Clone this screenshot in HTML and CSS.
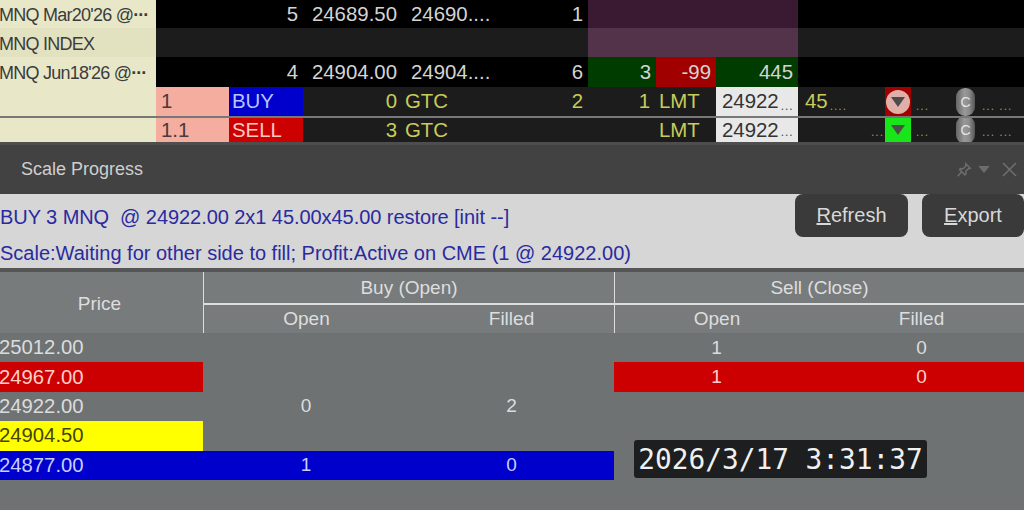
FILE: index.html
```html
<!DOCTYPE html>
<html lang="en">
<head>
<meta charset="utf-8">
<title>Scale Progress</title>
<link rel="stylesheet" href="styles.css">
</head>
<body>
<div class="page">
  <section class="blotter">
    <div class="row r1 black">
      <div class="cell name">MNQ Mar20'26 @<span class="dots">···</span></div><div></div>
      <div class="cell right c-pad">5</div><div class="cell right">24689.50</div><div class="cell trunc">24690....</div><div class="cell right c-pad2">1</div>
      <div class="purple span3"></div><div></div><div></div><div></div><div></div>
    </div>
    <div class="row r2 gray">
      <div class="cell name alt">MNQ INDEX</div><div></div><div></div><div></div><div></div><div></div>
      <div class="purple2 span3"></div><div></div><div></div><div></div><div></div>
    </div>
    <div class="row r3 black">
      <div class="cell name">MNQ Jun18'26 @<span class="dots">···</span></div><div></div>
      <div class="cell right c-pad">4</div><div class="cell right">24904.00</div><div class="cell trunc">24904....</div><div class="cell right c-pad2">6</div>
      <div class="cell right green">3</div><div class="cell right darkred">-99</div><div class="cell right green">445</div><div></div><div></div><div></div><div></div>
    </div>
    <div class="row r4 gray line">
      <div class="cell name"></div><div class="cell pink">1</div><div class="cell blue">BUY</div>
      <div class="cell right yel">0</div><div class="cell yel gtc">GTC</div><div class="cell right yel c-pad2">2</div>
      <div class="cell right yel c-pad6">1</div><div class="cell yel lmt">LMT</div><div class="cell white">24922<span class="tiny">...</span></div>
      <div class="cell yel pad45">45<span class="tiny">....</span></div>
      <div class="flag red-flag"><span class="circle"><span class="tri"></span></span></div>
      <div class="cell yel tinycell"><span class="tiny">...</span></div>
      <div class="cell cwrap"><span class="cbtn">C</span><span class="tiny">... ...</span></div>
    </div>
    <div class="row r5 gray">
      <div class="cell name"></div><div class="cell pink">1.1</div><div class="cell redbg">SELL</div>
      <div class="cell right yel">3</div><div class="cell yel gtc">GTC</div><div></div>
      <div></div><div class="cell yel lmt">LMT</div><div class="cell white">24922<span class="tiny">...</span></div>
      <div class="cell right yel tinyend"><span class="tiny">...</span></div>
      <div class="flag green-flag"><span class="tri"></span></div>
      <div class="cell yel tinycell"><span class="tiny">...</span></div>
      <div class="cell cwrap"><span class="cbtn">C</span><span class="tiny">... ...</span></div>
    </div>
  </section>

  <header class="titlebar">
    <span class="title">Scale Progress</span>
    <div class="win-icons">
      <svg class="ico-pin" width="16" height="16" viewBox="0 0 18 18"><path d="M11 2l5 5-2 .5-3 3 .2 3-1.2 1L4 8.500l1-1.200 3 .2 3-3z M6 11.500L2 16" fill="none" stroke="#6d6d6d" stroke-width="1.700"/></svg>
      <svg class="ico-down" width="12" height="7" viewBox="0 0 13 8"><path d="M0 0h13L6.500 8z" fill="#6d6d6d"/></svg>
      <svg class="ico-x" width="15" height="15" viewBox="0 0 15 15"><path d="M1 1l13 13M14 1L1 14" stroke="#6d6d6d" stroke-width="1.700"/></svg>
    </div>
  </header>

  <section class="info">
    <div class="info-text">
      <div class="info-line first">BUY 3 MNQ &nbsp;@ 24922.00 2x1 45.00x45.00 restore [init --]</div>
      <div class="info-line second">Scale:Waiting for other side to fill; Profit:Active on CME (1 @ 24922.00)</div>
    </div>
    <div class="buttons">
      <button class="btn btn-refresh"><u>R</u>efresh</button>
      <button class="btn btn-export"><u>E</u>xport</button>
    </div>
  </section>

  <section class="table">
    <div class="thead">
      <div class="th price-h">Price</div>
      <div class="th group g-buy">Buy (Open)</div>
      <div class="th group g-sell">Sell (Close)</div>
      <div class="th sub s1">Open</div>
      <div class="th sub s2">Filled</div>
      <div class="th sub s3">Open</div>
      <div class="th sub s4">Filled</div>
    </div>
    <div class="trow"><div class="p">25012.00</div><div></div><div></div><div>1</div><div>0</div></div>
    <div class="trow"><div class="p bg-red">24967.00</div><div></div><div></div><div class="bg-red">1</div><div class="bg-red">0</div></div>
    <div class="trow"><div class="p">24922.00</div><div>0</div><div>2</div><div></div><div></div></div>
    <div class="trow"><div class="p bg-yellow">24904.50</div><div></div><div></div><div></div><div></div></div>
    <div class="trow"><div class="p bg-blue">24877.00</div><div class="bg-blue">1</div><div class="bg-blue">0</div><div></div><div></div></div>
  </section>
  <div class="stamp">2026/3/17 3:31:37</div>
</div>
</body>
</html>
```
FILE: styles.css
```css
* { box-sizing: border-box; }
html, body { margin: 0; padding: 0; }
body { width: 1024px; height: 510px; overflow: hidden; background: #6e7273; font-family: "Liberation Sans", Arial, sans-serif; }
.page { position: relative; width: 1024px; height: 510px; display: flex; flex-direction: column; }

.blotter { display: flex; flex-direction: column; font-size: 20.400px; color: #d4d4d4; }
.row { display: grid; grid-template-columns: 156px 73px 74px 97px 91px 97px 68px 60px 82px 87px 26px 44px 69px; }
.r1 { height: 28px; } .r2 { height: 29px; } .r3 { height: 30px; } .r4 { height: 31px; } .r5 { height: 24px; }
.black { background: #000; }
.gray { background: #1c1c1c; }
.line { border-bottom: 2px solid #777; }
.cell { display: flex; align-items: center; white-space: nowrap; overflow: hidden; min-width: 0; }
.right { justify-content: flex-end; padding-right: 3px; }
.c-pad { padding-right: 5px; }
.c-pad2 { padding-right: 5px; }
.c-pad6 { padding-right: 6px; }
.trunc { padding-left: 11px; }
.name { background: #e8e8c8; color: #3c3c3c; font-size: 18px; letter-spacing: -0.750px; text-indent: -1px; padding-top: 3px; }
.name.alt { background: #e2e2c0; }
.dots { font-weight: bold; letter-spacing: -1px; margin-left: 1px; }
.span3 { grid-column: span 3; }
.purple { background: #3a1a33; }
.purple2 { background: #523349; }
.green { background: #003c00; padding-right: 5px; }
.darkred { background: #a00000; padding-right: 5px; }
.pink { background: #f4ad9f; color: #4a3a38; padding-left: 5px; }
.blue { background: #0000cc; color: #b9c6ff; padding-left: 3px; }
.redbg { background: #cc0000; color: #ffc9c0; padding-left: 3px; }
.yel { color: #c8cc58; }
.gtc { padding-left: 5px; }
.lmt { padding-left: 3px; }
.white { background: #e8e8e8; color: #333; padding-left: 6px; }
.tiny { font-size: 12px; letter-spacing: 1px; align-self: flex-end; padding-bottom: 3px; margin-left: 2px; color: #9a9a50; }
.white .tiny { color: #444; }
.pad45 { padding-left: 7px; }
.tinycell { padding-left: 3px; }
.tinyend { padding-right: 1px; }
.flag { display: flex; align-items: center; justify-content: center; }
.red-flag { background: #a00000; }
.green-flag { background: #19e619; }
.circle { width: 24px; height: 24px; border-radius: 50%; background: #e0b0a8; display: flex; align-items: center; justify-content: center; }
.tri { width: 0; height: 0; border-left: 7px solid transparent; border-right: 7px solid transparent; border-top: 10px solid #4c4c4c; }
.cwrap { padding-left: 1px; gap: 5px; }
.cbtn { width: 19px; height: 28px; flex: none; border-radius: 9px; background: linear-gradient(90deg, #666, #999 45%, #8a8a8a 70%, #555); color: #e6e6e6; font-size: 14px; display: flex; align-items: center; justify-content: center; }

.titlebar { height: 52px; background: #424242; border-top: 3px solid #4e4e4e; display: flex; align-items: center; justify-content: space-between; padding: 0 7px 0 21px; }
.title { color: #cfcfcf; font-size: 18px; }
.win-icons { display: flex; align-items: center; gap: 6px; }
.ico-x { margin-left: 6px; }

.info { height: 74px; background: #d6d6d6; display: flex; justify-content: space-between; }
.info-text { display: flex; flex-direction: column; color: #2a2aa0; font-size: 20px; padding-top: 5px; }
.info-line { height: 37px; line-height: 37px; white-space: nowrap; }
.first { letter-spacing: -0.060px; }
.second { margin-top: -1px; }
.buttons { display: flex; gap: 14px; align-items: flex-start; }
.btn { height: 43px; border: 0; border-radius: 8px; background: #3a3a3a; color: #d8d8d8; font: 20px "Liberation Sans", Arial, sans-serif; padding: 0; }
.btn-refresh { width: 113px; }
.btn-export { width: 102px; }

.table { flex: 1; border-top: 4px solid #555; display: flex; flex-direction: column; font-size: 19px; color: #dcdcdc; }
.thead { display: grid; grid-template-columns: 203px 206px 205px 205px 205px; grid-template-rows: 33px 28px; background: #777b7c; }
.th { display: flex; align-items: center; justify-content: center; color: #dedede; }
.price-h { grid-row: span 2; padding-top: 2px; padding-right: 4px; }
.group { grid-column: span 2; border-bottom: 2px solid #ddd; border-left: 1px solid #ddd; }
.s1, .s3 { border-left: 1px solid #ddd; }
.trow { display: grid; grid-template-columns: 203px 206px 205px 205px 205px; height: 29.400px; }
.trow > div { display: flex; align-items: center; justify-content: center; }
.trow > .p { justify-content: flex-start; font-size: 20.300px; text-indent: -1px; }
.bg-red { background: #cc0000; color: #ffd0c8; }
.bg-yellow { background: #ffff00; color: #444400; }
.bg-blue { background: #0000cc; color: #c6ceff; }

.stamp { position: absolute; left: 634px; top: 440px; width: 293px; height: 38px; border-radius: 3px; background: #1c1e1f; color: #f0f0f0; font: 27.800px "DejaVu Sans Mono", monospace; line-height: 39px; text-align: center; white-space: nowrap; }
```
